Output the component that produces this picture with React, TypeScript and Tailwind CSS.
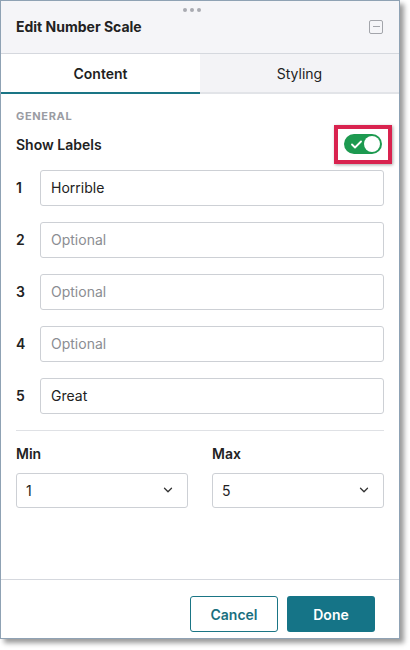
import { ChevronDown } from 'lucide-react';

const font = { fontFamily: 'Inter, "Liberation Sans", sans-serif' };

function LabelRow({ n, value, placeholder }: { n: number; value?: string; placeholder?: string }) {
  return (
    <div className="flex items-center">
      <span className="w-6 text-[14px] font-semibold text-[#222]">{n}</span>
      <div className="flex h-[36px] flex-1 items-center rounded-[3px] border border-[#cdd0d5] bg-white px-[10px] text-[14px]">
        {value ? <span className="text-[#222]">{value}</span> : <span className="text-[#8b8d92]">{placeholder}</span>}
      </div>
    </div>
  );
}

function SelectBox({ label, value }: { label: string; value: string }) {
  return (
    <div className="flex w-[172px] flex-col">
      <span className="text-[14px] font-semibold text-[#222]">{label}</span>
      <div className="mt-[9px] flex h-[35px] items-center justify-between rounded-[3px] border border-[#cdd0d5] bg-white pl-[9px] pr-[12px] text-[14px] text-[#222]">
        <span>{value}</span>
        <ChevronDown size={14} strokeWidth={2.2} className="text-[#333]" />
      </div>
    </div>
  );
}

export default function App() {
  return (
    <div className="h-[650px] w-[410px] bg-white" style={font}>
      <div className="flex h-[639px] w-[400px] flex-col border border-[#8fa2b4] bg-white shadow-[4px_4px_5px_rgba(0,0,0,0.4)]">
        {/* header */}
        <div className="relative flex h-[53px] items-center justify-between border-b border-[#d5d8de] bg-[#f5f5f8] pb-[1px] pl-[15px] pr-[16px]">
          <div className="absolute left-[182px] top-[7px] flex gap-[3px]">
            <span className="h-[4px] w-[4px] rounded-full bg-[#a9abb2]" />
            <span className="h-[4px] w-[4px] rounded-full bg-[#a9abb2]" />
            <span className="h-[4px] w-[4px] rounded-full bg-[#a9abb2]" />
          </div>
          <span className="text-[14px] font-bold text-[#222]">Edit Number Scale</span>
          <div className="flex h-[14px] w-[14px] items-center justify-center rounded-[2px] border-[1.5px] border-[#a3a5ab]">
            <span className="h-[1.5px] w-[7px] bg-[#a3a5ab]" />
          </div>
        </div>

        {/* tabs */}
        <div className="flex h-[40px]">
          <div className="flex flex-1 items-center justify-center border-b-[2px] border-[#1a7585] bg-white text-[14px] font-semibold text-[#1f1f1f]">
            Content
          </div>
          <div className="flex flex-1 items-center justify-center border-b-[2px] border-[#e2e4e8] bg-[#f3f3f6] text-[14px] text-[#222]">
            Styling
          </div>
        </div>

        {/* body */}
        <div className="flex flex-1 flex-col px-[15px] pt-[14px]">
          <span className="text-[11px] font-bold tracking-[0.06em] text-[#9a9ca3]">GENERAL</span>
          <div className="flex h-[39px] items-center justify-between">
            <span className="text-[14px] font-semibold text-[#222]">Show Labels</span>
            <div className="-mr-[8px] flex h-[39px] w-[58px] items-center justify-center border-[4px] border-[#d9234f] shadow-[1px_1px_3px_rgba(0,0,0,0.35)]">
              <div className="flex h-[20px] w-[38px] items-center justify-between rounded-full bg-[#1d9a50] pl-[7px] pr-[2px]">
                <svg width="11" height="9" viewBox="0 0 11 9" fill="none">
                  <path d="M1 4.5 L4 7.5 L10 1.5" stroke="white" strokeWidth="1.8" strokeLinecap="round" strokeLinejoin="round" />
                </svg>
                <span className="h-[16px] w-[16px] rounded-full bg-white" />
              </div>
            </div>
          </div>

          <div className="mt-[6px] flex flex-col gap-[16px]">
            <LabelRow n={1} value="Horrible" />
            <LabelRow n={2} placeholder="Optional" />
            <LabelRow n={3} placeholder="Optional" />
            <LabelRow n={4} placeholder="Optional" />
            <LabelRow n={5} value="Great" />
          </div>

          <div className="mt-[16px] h-px bg-[#dfe1e5]" />

          <div className="mt-[12px] flex justify-between">
            <SelectBox label="Min" value="1" />
            <SelectBox label="Max" value="5" />
          </div>
        </div>

        {/* footer */}
        <div className="flex h-[59px] items-start justify-end gap-[9px] border-t border-[#d5d8de] pr-[24px] pt-[16px]">
          <button className="h-[36px] w-[88px] rounded-[3px] border border-[#1a7585] bg-white text-[14px] font-semibold text-[#1a6f80]">
            Cancel
          </button>
          <button className="h-[36px] w-[88px] rounded-[3px] bg-[#157487] text-[14px] font-semibold text-white">
            Done
          </button>
        </div>
      </div>
    </div>
  );
}
